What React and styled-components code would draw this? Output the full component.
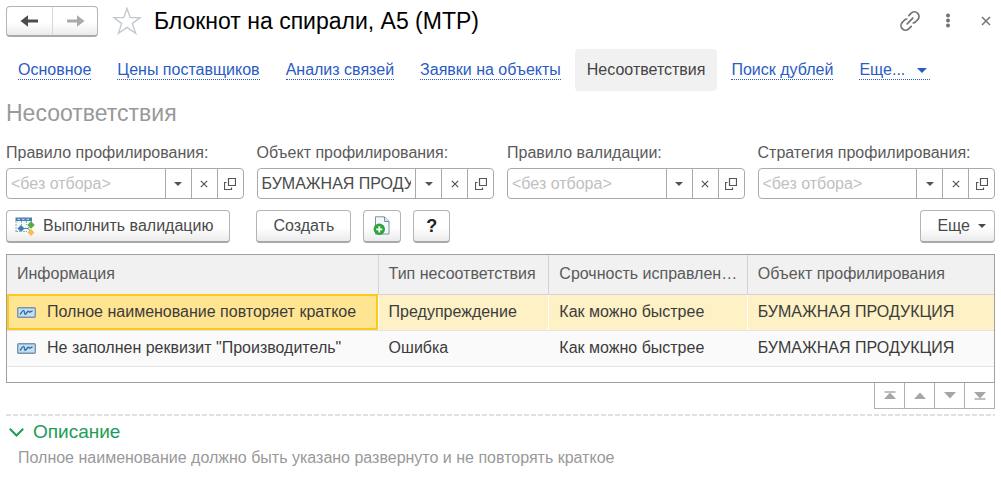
import React, { useState } from 'react'
import styled, { createGlobalStyle } from 'styled-components'

const GlobalStyle = createGlobalStyle`
  * {
    box-sizing: border-box;
  }
  body {
    margin: 0;
    background-color: #fff;
    color: #4a4a4a;
    font-family: 'Liberation Sans', Arial, sans-serif;
    font-size: 16px;
    line-height: 20px;
  }
  button, input, table {
    font: inherit;
    color: inherit;
  }
  button {
    cursor: pointer;
  }
  svg {
    display: block;
    flex: none;
  }
`

const Page = styled.main`
  padding: 5px 6px 8px;
`

const Header = styled.header`
  display: flex;
  align-items: center;
  height: 32px;
`

const RaisedButton = styled.button`
  display: flex;
  align-items: center;
  justify-content: center;
  gap: 8px;
  height: 33px;
  padding: ${(props) => props.$pad || '0 16px'};
  border: 1px solid #b4b4b4;
  border-bottom: 2px solid #a8a8a8;
  border-radius: 4px;
  background: linear-gradient(#fff 55%, #ebebeb);
`

const History = styled.div`
  display: flex;
  height: 31px;
  border: 1px solid #b4b4b4;
  border-bottom: 2px solid #a8a8a8;
  border-radius: 4px;
  background: linear-gradient(#fff 55%, #ebebeb);
`

const HistoryButton = styled.button`
  display: flex;
  align-items: center;
  justify-content: center;
  width: 45px;
  padding: 0;
  border: 0;
  background: none;
  color: ${(props) => (props.disabled ? '#aaa' : '#4c4c4c')};

  & + & {
    border-left: 1px solid #d8d8d8;
  }
`

const IconButton = styled.button`
  display: flex;
  align-items: center;
  justify-content: center;
  width: 30px;
  height: 30px;
  padding: 0;
  border: 0;
  background: none;
  color: #737373;
`

const FavoriteButton = styled(IconButton)`
  margin: 0 12px 0 14px;
`

const Title = styled.h1`
  flex: 1;
  margin: 0;
  color: #000;
  font-size: 23px;
  font-weight: 400;
  line-height: 28px;
`

const HeaderActions = styled.div`
  display: flex;
  gap: 8px;
  margin-right: -6px;
`

const Nav = styled.nav`
  display: flex;
  align-items: center;
  gap: 2px;
  margin-top: 12px;
  height: 42px;
`

const NavItem = styled.a`
  padding: 12px 12px 11px;
  border-radius: 4px;
  background-color: ${(props) => (props.$active ? '#f1f1f1' : 'transparent')};
  color: ${(props) => (props.$active ? '#444' : '#2a5cc4')};
  text-decoration: none;
  white-space: nowrap;

  span {
    display: flex;
    align-items: center;
    gap: 12px;
    line-height: 18px;
    border-bottom: 1px dotted
      ${(props) => (props.$active ? 'transparent' : '#2a5cc4')};
  }
`

const NavMore = styled(NavItem)`
  span {
    padding-right: 3px;
  }
`

const Heading = styled.h2`
  margin: 9px 0 0;
  color: #999;
  font-size: 23px;
  font-weight: 400;
  line-height: 26px;
`

const Filters = styled.div`
  display: grid;
  grid-template-columns: repeat(4, minmax(0, 1fr));
  gap: 13px;
  margin-top: 17px;
`

const FilterLabel = styled.label`
  display: block;
  margin-bottom: 5px;
  color: #5a5a5a;
  white-space: nowrap;
`

const Field = styled.div`
  display: flex;
  height: 31px;
  border: 1px solid #aaa;
  border-radius: 4px;
`

const FieldInput = styled.input`
  flex: 1;
  min-width: 0;
  padding: 0 4px;
  border: 0;
  outline: 0;
  background: none;

  &::placeholder {
    color: #c0c0c0;
    opacity: 1;
  }
`

const FieldButton = styled.button`
  display: flex;
  align-items: center;
  justify-content: center;
  width: 26px;
  padding: 0;
  border: 0;
  border-left: 1px solid #aaa;
  background: none;
  color: #555;
`

const Toolbar = styled.div`
  display: flex;
  margin-top: 11px;
`

const ToolGroup = styled.div`
  display: flex;
  flex: 1;
  gap: 12px;
`

const MainAction = styled.div`
  margin-right: 14px;
`

const HelpMark = styled.span`
  color: #222;
  font-size: 18px;
  font-weight: 700;
`

const TableBox = styled.div`
  height: 129px;
  margin-top: 11px;
  border: 1px solid #a0a0a0;
`

const Table = styled.table`
  width: 100%;
  table-layout: fixed;
  border-collapse: collapse;
`

const HeadCell = styled.th`
  width: ${(props) => props.$width};
  height: 39px;
  padding: 0 9px 0 10px;
  overflow: hidden;
  border-bottom: 1px solid #d4d4d4;
  border-right: 1px solid #d4d4d4;
  background-color: #f1f1f1;
  color: #5a5a5a;
  font-weight: 400;
  text-align: left;
  text-overflow: ellipsis;
  white-space: nowrap;

  &:last-child {
    border-right: 0;
  }
`

const Row = styled.tr`
  background-color: ${(props) => (props.$selected ? '#fdf1c5' : '#fafafa')};
  color: #3c3c3c;
`

const Cell = styled.td`
  height: 36px;
  padding: 0 10px;
  overflow: hidden;
  border-bottom: 1px solid #e4e4e4;
  border-right: 1px solid ${(props) => (props.$selected ? '#fff' : '#fafafa')};
  white-space: nowrap;

  &:last-child {
    border-right: 0;
  }
  &:first-child {
    background-color: ${(props) => (props.$selected ? '#ffe591' : '#fafafa')};
    outline: ${(props) => (props.$selected ? '2px solid #fec91f' : 'none')};
    outline-offset: -2px;
  }
`

const CellContent = styled.div`
  display: flex;
  align-items: center;
  gap: 11px;
`

const Pager = styled.div`
  display: flex;
  justify-content: flex-end;
`

const PagerButton = styled.button`
  display: flex;
  align-items: center;
  justify-content: center;
  width: 30px;
  height: 26px;
  padding: 0;
  border: 1px solid #b0b0b0;
  border-top: 0;
  border-right: 0;
  background: #fff;
  color: #a6a6a6;

  &:last-child {
    width: 31px;
    border-right: 1px solid #b0b0b0;
  }
`

const Details = styled.section`
  margin-top: 5px;
`

const Divider = styled.svg`
  width: 100%;
  height: 2px;
`

const DetailsToggle = styled.button`
  display: flex;
  align-items: center;
  gap: 9px;
  margin-top: 4px;
  padding: 0 3px;
  border: 0;
  background: none;
  color: #1d9d57;
  font-size: 19px;
  line-height: 24px;
`

const DetailsText = styled.p`
  margin: 4px 12px 0;
  color: #999;
`

const ArrowIcon = ({ flip }) => (
  <svg width="19" height="12" viewBox="0 0 19 12">
    <g transform={flip ? 'translate(19 0) scale(-1 1)' : undefined}>
      <path d="M.5 6 8 .2V4.5H18V7.5H8V11.8Z" fill="currentColor" />
    </g>
  </svg>
)

const StarIcon = () => (
  <svg width="30" height="28" viewBox="0 0 30 28">
    <path
      d="M15 1.5 18.2 10.6H28L20.3 16.6 23.6 26.3 15 20.4 6.4 26.3 9.7 16.6 2 10.6H11.8Z"
      fill="#fff"
      stroke="#c3c9d0"
      strokeWidth="1.4"
    />
  </svg>
)

const LinkIcon = () => (
  <svg width="20" height="20" viewBox="0 0 20 20" fill="none">
    <g stroke="currentColor" strokeWidth="1.7" strokeLinecap="round">
      <path d="M8.8 4.6 11 2.3A4.5 4.5 0 0 1 17.7 8.7L15.4 11Q14.4 11.9 13.2 12" />
      <path d="M11.2 15.4 9 17.7A4.5 4.5 0 0 1 2.3 11.3L4.6 9Q5.6 8.1 6.8 8" />
      <path d="M7.2 12.8 12.8 7.2" />
    </g>
  </svg>
)

const DotsIcon = () => (
  <svg width="6" height="16" viewBox="0 0 6 16" fill="currentColor">
    <circle cx="3" cy="2.5" r="2" />
    <circle cx="3" cy="7.5" r="2" />
    <circle cx="3" cy="12.5" r="2" />
  </svg>
)

const CrossIcon = ({ size = 8 }) => (
  <svg width={size} height={size} viewBox="0 0 10 10">
    <path d="M1 1 9 9M9 1 1 9" stroke="currentColor" strokeWidth="1.5" />
  </svg>
)

const CaretIcon = ({ width = 8, height = 4 }) => (
  <svg width={width} height={height} viewBox="0 0 8 4">
    <path d="M0 0H8L4 4Z" fill="currentColor" />
  </svg>
)

const OpenIcon = () => (
  <svg width="12" height="12" viewBox="0 0 12 12" fill="none">
    <path
      d="M4.5 .5H11.5V7.5H4.5ZM2.5 4.5H.5V11.5H7.5V9.5"
      stroke="currentColor"
      strokeWidth="1.2"
    />
  </svg>
)

const ValidateIcon = () => (
  <svg width="20" height="19" viewBox="0 0 20 19">
    <path d="M1 1H17V15H1Z" fill="#f4f7fa" />
    <path d="M.5 .5H17V4H.5Z" fill="#477fa9" />
    <path d="M2.5 2.3H5M7 2.3H9.5M11.5 2.3H14" stroke="#d5e4ee" />
    <path
      d="M1 4V15M6.5 4V8M11.5 4V8M16.5 4V5M1 14.5H5M8 14.5H12"
      stroke="#8ba9c0"
      strokeDasharray="2 1"
    />
    <path d="M2.5 11.5 6 8 9.5 11.5 6 15Z" fill="#3e7dac" />
    <path d="M9 11.5H13L16 8M13 11.5 16 15" stroke="#477fa9" fill="none" />
    <path d="M12.3 8 16 4.3 19.7 8 16 11.7Z" fill="#58ac3b" />
    <path d="M16 12 19.5 15.5 16 19 12.5 15.5Z" fill="#f3bf4f" />
  </svg>
)

const AddDocumentIcon = () => (
  <svg width="18" height="20" viewBox="0 0 18 20">
    <path d="M2.5 .8H11.5L16 5.5V18H2.5Z" fill="#f5f8fb" stroke="#7890a5" />
    <path d="M11.5 1V5.5H16" fill="#dce6ee" stroke="#7890a5" />
    <circle cx="6.3" cy="13.3" r="5.7" fill="#2ea43c" />
    <path d="M6.3 10.2V16.4M3.2 13.3H9.4" stroke="#fff" strokeWidth="1.8" />
  </svg>
)

const RecordIcon = () => (
  <svg width="19" height="11" viewBox="0 0 19 11">
    <rect x=".7" y=".7" width="17.6" height="9.6" rx="1" fill="#c3dff1" stroke="#7895ac" strokeWidth="1.4" />
    <path
      d="M3 7.5C4.5 5.5 5.3 3.4 6.6 3.4S7 7.3 8.3 7.3 10 4.2 11.2 4.2 12 5.4 13 5 14.5 4 15.5 4"
      fill="none"
      stroke="#2f6fa5"
      strokeWidth="1.4"
    />
  </svg>
)

const PagerIcon = ({ down, edge }) => (
  <svg width="12" height="9" viewBox="0 0 12 9">
    <g transform={down ? 'translate(0 9) scale(1 -1)' : undefined}>
      {edge && <path d="M.5 1H11.5" stroke="currentColor" strokeWidth="1.4" />}
      <path d="M6 1.5 12 8H0Z" fill="currentColor" />
    </g>
  </svg>
)

const ChevronIcon = () => (
  <svg width="15" height="9" viewBox="0 0 15 9" fill="none">
    <path d="M.8 .8 7.5 7.5 14.2 .8" stroke="currentColor" strokeWidth="2" />
  </svg>
)

const SECTIONS = [
  'Основное',
  'Цены поставщиков',
  'Анализ связей',
  'Заявки на объекты',
  'Несоответствия',
  'Поиск дублей',
]

const FILTERS = [
  { id: 'profilingRule', label: 'Правило профилирования:', value: '' },
  { id: 'profilingObject', label: 'Объект профилирования:', value: 'БУМАЖНАЯ ПРОДУКЦИЯ' },
  { id: 'validationRule', label: 'Правило валидации:', value: '' },
  { id: 'strategy', label: 'Стратегия профилирования:', value: '' },
]

const COLUMNS = [
  { title: 'Информация', width: '37.6%' },
  { title: 'Тип несоответствия', width: '17.3%' },
  { title: 'Срочность исправления', width: '20.1%' },
  { title: 'Объект профилирования', width: '25%' },
]

const ROWS = [
  ['Полное наименование повторяет краткое', 'Предупреждение', 'Как можно быстрее', 'БУМАЖНАЯ ПРОДУКЦИЯ'],
  ['Не заполнен реквизит "Производитель"', 'Ошибка', 'Как можно быстрее', 'БУМАЖНАЯ ПРОДУКЦИЯ'],
]

const Filter = ({ id, label, value: initial }) => {
  const [value, setValue] = useState(initial)

  return (
    <div>
      <FilterLabel htmlFor={id}>{label}</FilterLabel>
      <Field>
        <FieldInput
          id={id}
          value={value}
          placeholder="<без отбора>"
          onChange={(e) => setValue(e.target.value)}
        />
        <FieldButton aria-label="Выбрать">
          <CaretIcon />
        </FieldButton>
        <FieldButton aria-label="Очистить" onClick={() => setValue('')}>
          <CrossIcon />
        </FieldButton>
        <FieldButton aria-label="Открыть">
          <OpenIcon />
        </FieldButton>
      </Field>
    </div>
  )
}

const App = () => {
  const [section, setSection] = useState('Несоответствия')
  const [selected, setSelected] = useState(0)
  const [open, setOpen] = useState(true)

  return (
    <Page>
      <GlobalStyle />
      <Header>
        <History>
          <HistoryButton aria-label="Назад">
            <ArrowIcon />
          </HistoryButton>
          <HistoryButton aria-label="Вперед" disabled>
            <ArrowIcon flip />
          </HistoryButton>
        </History>
        <FavoriteButton aria-label="В избранное">
          <StarIcon />
        </FavoriteButton>
        <Title>Блокнот на спирали, A5 (МТР)</Title>
        <HeaderActions>
          <IconButton aria-label="Ссылка">
            <LinkIcon />
          </IconButton>
          <IconButton aria-label="Меню">
            <DotsIcon />
          </IconButton>
          <IconButton aria-label="Закрыть">
            <CrossIcon size={10} />
          </IconButton>
        </HeaderActions>
      </Header>

      <Nav>
        {SECTIONS.map((name) => (
          <NavItem
            key={name}
            href="#"
            $active={name === section}
            onClick={() => setSection(name)}
          >
            <span>{name}</span>
          </NavItem>
        ))}
        <NavMore href="#">
          <span>
            Еще...
            <CaretIcon width={10} height={5} />
          </span>
        </NavMore>
      </Nav>

      <Heading>Несоответствия</Heading>

      <Filters>
        {FILTERS.map((filter) => (
          <Filter key={filter.id} {...filter} />
        ))}
      </Filters>

      <Toolbar>
        <ToolGroup>
          <MainAction>
            <RaisedButton $pad="0 16px 0 8px">
              <ValidateIcon />
              Выполнить валидацию
            </RaisedButton>
          </MainAction>
          <RaisedButton>Создать</RaisedButton>
          <RaisedButton $pad="0 9px" aria-label="Добавить">
            <AddDocumentIcon />
          </RaisedButton>
          <RaisedButton $pad="0 12px" aria-label="Справка">
            <HelpMark>?</HelpMark>
          </RaisedButton>
        </ToolGroup>
        <RaisedButton $pad="0 8px 0 16px">
          Еще
          <CaretIcon />
        </RaisedButton>
      </Toolbar>

      <TableBox>
        <Table>
          <thead>
            <tr>
              {COLUMNS.map(({ title, width }) => (
                <HeadCell key={title} $width={width}>
                  {title}
                </HeadCell>
              ))}
            </tr>
          </thead>
          <tbody>
            {ROWS.map((row, i) => (
              <Row key={row[0]} $selected={i === selected} onClick={() => setSelected(i)}>
                {row.map((text, j) => (
                  <Cell key={j} $selected={i === selected}>
                    <CellContent>
                      {j === 0 && <RecordIcon />}
                      {text}
                    </CellContent>
                  </Cell>
                ))}
              </Row>
            ))}
          </tbody>
        </Table>
      </TableBox>
      <Pager>
        <PagerButton aria-label="В начало">
          <PagerIcon edge />
        </PagerButton>
        <PagerButton aria-label="Вверх">
          <PagerIcon />
        </PagerButton>
        <PagerButton aria-label="Вниз">
          <PagerIcon down />
        </PagerButton>
        <PagerButton aria-label="В конец">
          <PagerIcon down edge />
        </PagerButton>
      </Pager>

      <Details>
        <Divider>
          <line x1="0" y1="1" x2="100%" y2="1" stroke="#e0e0e0" strokeWidth="2" strokeDasharray="5 2" />
        </Divider>
        <DetailsToggle aria-expanded={open} onClick={() => setOpen(!open)}>
          <ChevronIcon />
          Описание
        </DetailsToggle>
        {open && (
          <DetailsText>
            Полное наименование должно быть указано развернуто и не повторять краткое
          </DetailsText>
        )}
      </Details>
    </Page>
  )
}

export default App
